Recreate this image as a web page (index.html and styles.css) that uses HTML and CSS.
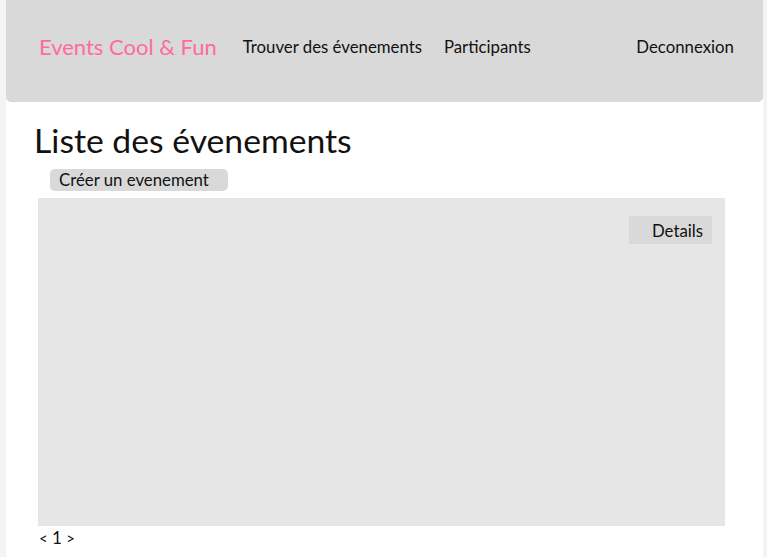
FILE: index.html
```html
<!DOCTYPE html>
<html lang="fr">
<head>
<meta charset="utf-8">
<title>Events Cool &amp; Fun</title>
<link rel="stylesheet" href="styles.css">
</head>
<body>
<div class="page">
  <header class="topbar">
    <a class="brand">Events Cool &amp; Fun</a>
    <nav class="nav">
      <a class="nav-link">Trouver des évenements</a>
      <a class="nav-link">Participants</a>
    </nav>
    <a class="nav-link logout">Deconnexion</a>
  </header>
  <main class="main">
    <h1 class="title">Liste des évenements</h1>
    <button class="create-btn">Créer un evenement</button>
    <section class="panel">
      <button class="details-btn">Details</button>
    </section>
    <div class="pager"><span class="arrow">&lt;</span> <span class="num">1</span> <span class="arrow">&gt;</span></div>
  </main>
</div>
</body>
</html>
```

FILE: styles.css
```css
* { box-sizing: border-box; }
html, body { margin: 0; padding: 0; }
body {
  background: #f4f4f4;
  font-family: Lato, "Open Sans", sans-serif;
  color: #111;
  height: 557px;
  overflow: hidden;
}
.page {
  margin: 0 4px 0 6px;
  background: #fff;
  height: 557px;
}
.topbar {
  height: 102px;
  background: #d9d9d9;
  border-radius: 0 0 5px 5px;
  display: flex;
  align-items: center;
  padding: 0 29px 10px 33px;
}
.brand {
  color: #ff6b9b;
  font-size: 22px;
  margin-right: 26px;
}
.nav {
  display: flex;
  gap: 22px;
  flex: 1;
}
.nav-link {
  font-size: 16.8px;
  color: #111;
}
.main {
  padding: 18px 0 0 0;
}
.title {
  margin: 0 0 9px 28px;
  font-weight: 400;
  font-size: 33.7px;
  line-height: 40px;
}
.create-btn {
  display: block;
  margin-left: 44px;
  width: 178px;
  height: 22px;
  border: none;
  border-radius: 5px;
  background: #d9d9d9;
  font-family: inherit;
  font-size: 16.8px;
  color: #111;
  text-align: left;
  padding: 0 0 0 9px;
  line-height: 22px;
}
.panel {
  margin: 7px 0 0 32px;
  width: 687px;
  height: 328px;
  background: #e6e6e6;
  display: flex;
  justify-content: flex-end;
  align-items: flex-start;
  padding: 18px 13px 0 0;
}
.details-btn {
  width: 83px;
  height: 28px;
  border: none;
  background: #d9d9d9;
  font-family: inherit;
  font-size: 16.8px;
  color: #111;
  text-align: right;
  padding: 0 9px 0 0;
}
.pager {
  margin: 1px 0 0 33px;
  font-size: 17px;
  line-height: 22px;
}
.arrow { font-size: 15px; }
```
